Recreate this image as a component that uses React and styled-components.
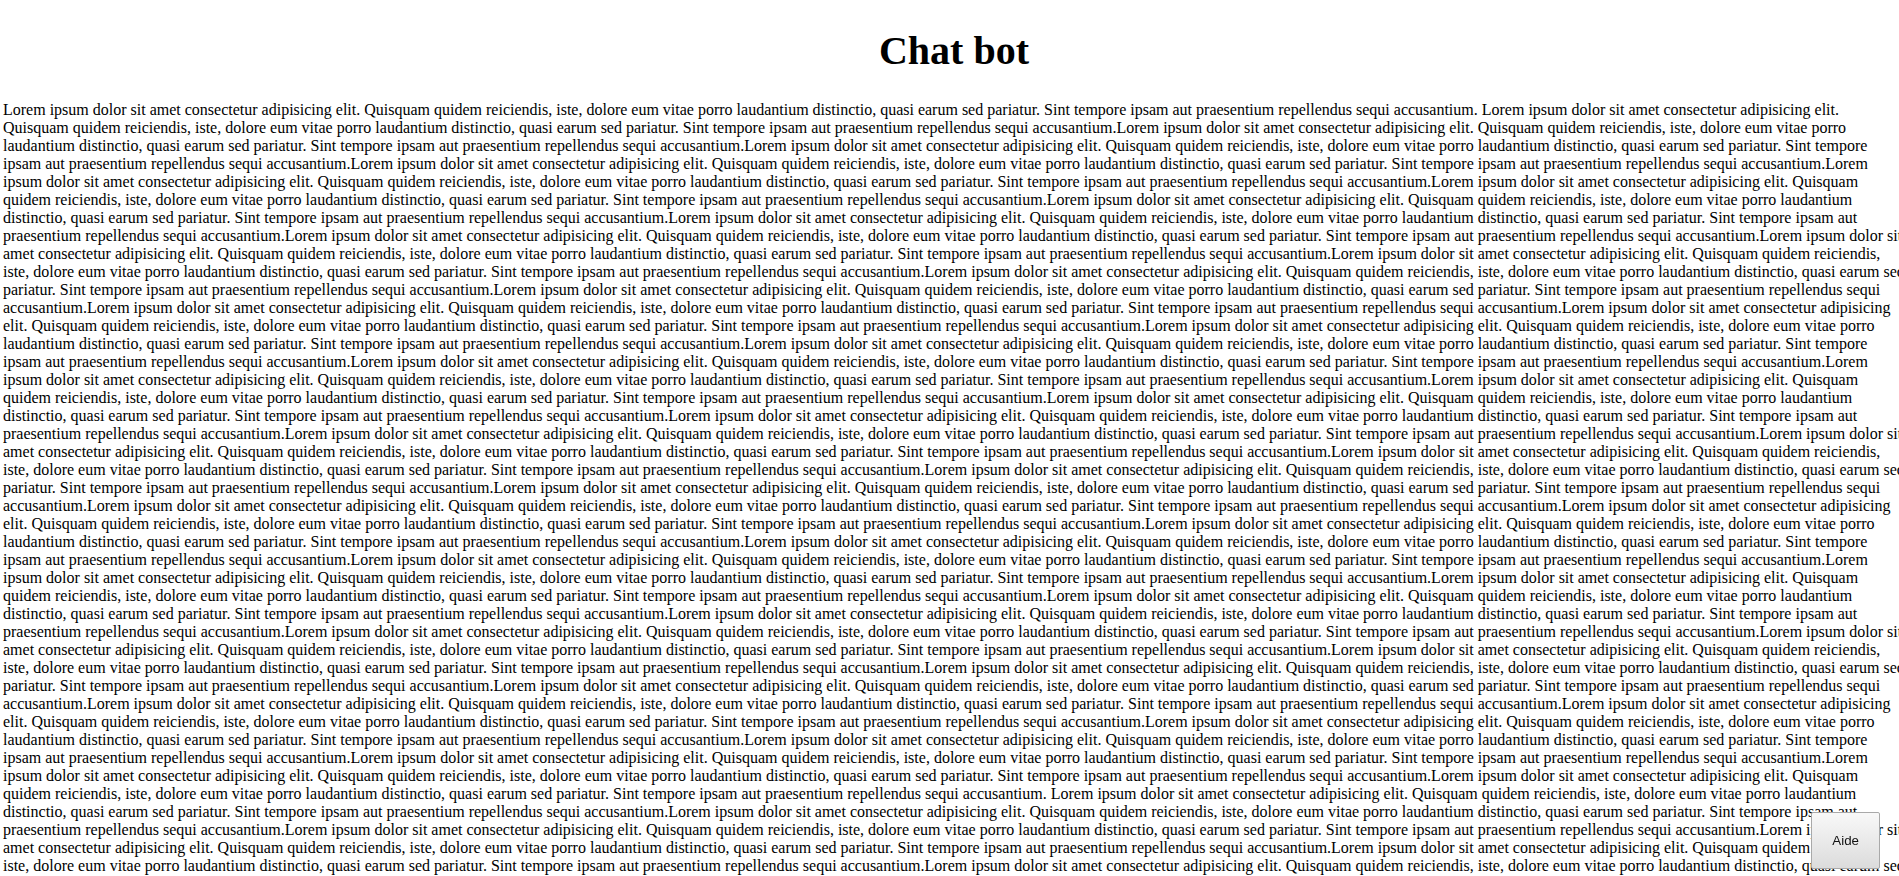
import styled, { createGlobalStyle } from "styled-components";

const GlobalStyle = createGlobalStyle`
  body {
    margin: 0;
    background: #ffffff;
    color: #000000;
    font-family: "Liberation Serif", "Times New Roman", serif;
    font-size: 16px;
  }
`;

const Page = styled.div`
  width: 1902px;
  margin-left: 3px;
`;

const Title = styled.h1`
  font-size: 40px;
  font-weight: bold;
  text-align: center;
  margin: 0.67em 0;
`;

const Text = styled.p`
  margin: 0;
  line-height: normal;
`;

const HelpButton = styled.button`
  position: fixed;
  right: 19px;
  bottom: 7px;
  padding: 20px;
  font-family: "Liberation Sans", Arial, sans-serif;
  font-size: 13.33px;
  color: #111;
  background: linear-gradient(#f8f8f8, #dcdcdc);
  border: 1px solid #a9a9a9;
  border-radius: 2px;
  cursor: pointer;
`;

const UNIT =
  "Lorem ipsum dolor sit amet consectetur adipisicing elit. Quisquam quidem reiciendis, iste, dolore eum vitae porro laudantium distinctio, quasi earum sed pariatur. Sint tempore ipsam aut praesentium repellendus sequi accusantium.";

const body = [UNIT, UNIT.repeat(48), UNIT.repeat(12)].join(" ");

const App = () => {
  return (
    <>
      <GlobalStyle />
      <Page>
        <Title>Chat bot</Title>
        <Text>{body}</Text>
      </Page>
      <HelpButton>Aide</HelpButton>
    </>
  );
};

export default App;
